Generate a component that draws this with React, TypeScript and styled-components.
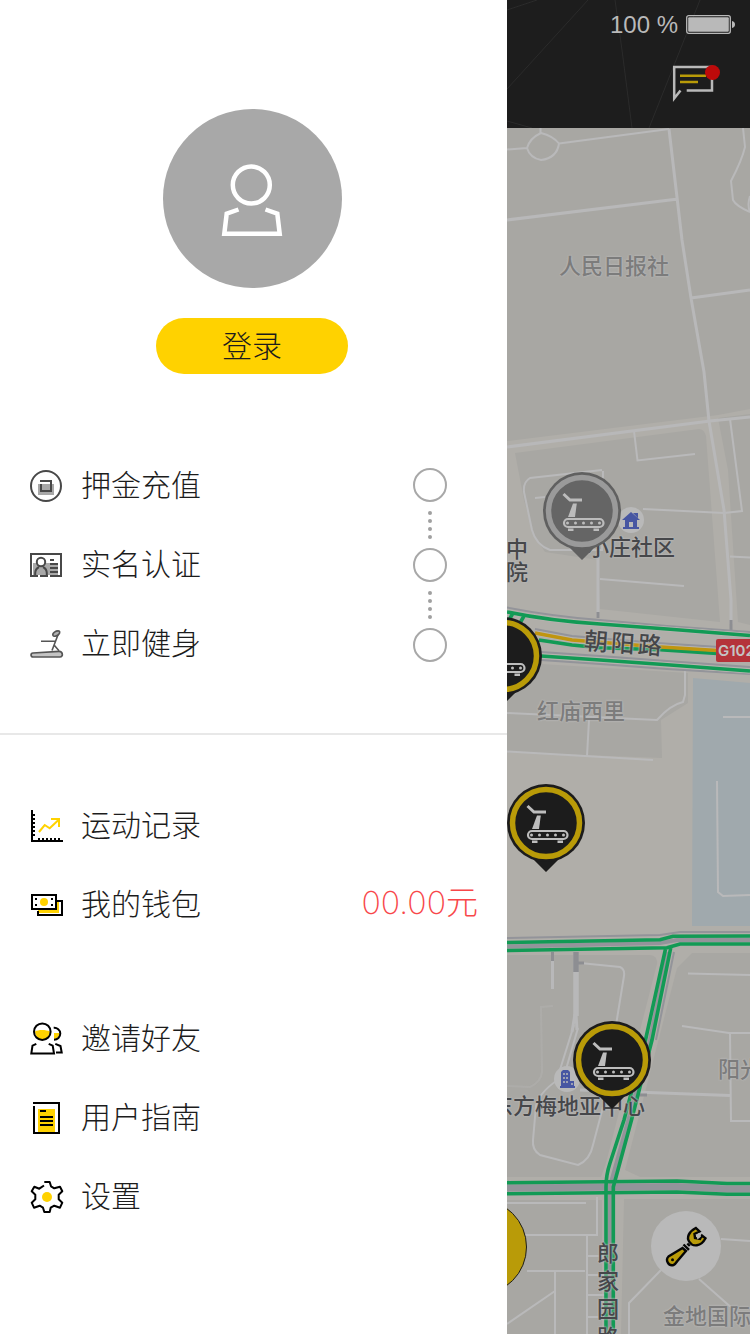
import React from "react";
import styled, { createGlobalStyle, css } from "styled-components";

const GlobalStyle = createGlobalStyle`
  *, *::before, *::after { box-sizing: border-box; }
  body {
    margin: 0;
    background: #ffffff;
    color: #1c1c1c;
    font-family: "Liberation Sans", "Noto Sans CJK SC", sans-serif;
  }
  svg { display: block; }
  ul { list-style: none; margin: 0; padding: 0; }
  button { border: 0; padding: 0; font: inherit; cursor: pointer; }
`;

const yellow = "#ffd200";
const dimYellow = "#b99b08";
const green = "#129a55";

/* ---------- Page ---------- */

const Page = styled.div`
  display: flex;
  min-height: 100vh;
  overflow: hidden;
`;

const Drawer = styled.aside`
  flex: 0 0 67.6%;
  background: #ffffff;
  padding-bottom: 40px;
`;

const Backdrop = styled.main`
  flex: 1;
  min-width: 0;
  display: flex;
  flex-direction: column;
`;

/* ---------- Drawer ---------- */

const Profile = styled.section`
  display: flex;
  flex-direction: column;
  align-items: center;
  gap: 30px;
  padding: 109px 3px 0 0;
`;

const Avatar = styled.div`
  width: 179px;
  height: 179px;
  border-radius: 50%;
  background: #a8a8a8;
`;

const LoginButton = styled.button`
  width: 192px;
  height: 56px;
  padding-bottom: 4px;
  border-radius: 28px;
  background: ${yellow};
  color: #1c1c1c;
  font-family: "Noto Sans CJK SC", sans-serif;
  font-size: 30px;
  font-weight: 300;
  line-height: 52px;
`;

const Steps = styled.section`
  display: flex;
  justify-content: space-between;
  align-items: center;
  padding: 72px 60px 50px 0;
  border-bottom: 2px solid #e8e8e8;
`;

const StepTrack = styled.div`
  display: flex;
  flex-direction: column;
  align-items: center;
  gap: 9px;
`;

const StepRing = styled.span`
  width: 34px;
  height: 34px;
  border: 2px solid #a8a8a8;
  border-radius: 50%;
`;

const StepDots = styled.span`
  display: flex;
  flex-direction: column;
  gap: 4px;
`;

const Dot = styled.i`
  width: 4px;
  height: 4px;
  border-radius: 50%;
  background: #a0a0a0;
`;

const Menu = styled.ul<{ $top: number }>`
  padding-top: ${(p) => p.$top}px;
`;

const MenuLink = styled.a`
  display: flex;
  align-items: center;
  gap: 17px;
  height: 79px;
  padding: 0 29px 0 30px;
  color: #1c1c1c;
  text-decoration: none;
  font-family: "Noto Sans CJK SC", sans-serif;
  font-size: 30px;
  font-weight: 300;
  line-height: 40px;
`;

const MenuLabel = styled.span`
  padding-bottom: 5px;
`;

const Amount = styled.span`
  margin-left: auto;
  padding-bottom: 4px;
  color: #f8474a;
  font-family: Inter, "Noto Sans CJK SC", sans-serif;
  font-size: 32px;
  font-weight: 200;
`;

/* ---------- Header over the map ---------- */

const Header = styled.header`
  position: relative;
  height: 128px;
  background: #1d1d1d;
  overflow: hidden;
`;

const HeaderLines = styled.svg`
  position: absolute;
  inset: 0;
`;

const StatusBar = styled.div`
  position: relative;
  display: flex;
  justify-content: flex-end;
  align-items: center;
  gap: 8px;
  height: 50px;
  padding-right: 14px;
  color: #b9b9b9;
  font-size: 24px;
  line-height: 28px;
`;

const Toolbar = styled.div`
  position: relative;
  display: flex;
  justify-content: flex-end;
  padding: 12px 28px 0 0;
`;

const MessageButton = styled.button`
  background: none;
`;

/* ---------- Map ---------- */

const MapCanvas = styled.div`
  position: relative;
  flex: 1;
  overflow: hidden;
  background: #b0aea9;
`;

const MapDrawing = styled.svg`
  position: absolute;
  inset: 0;
  width: 100%;
  height: 100%;
`;

const placed = css<{ $x: number; $y: number }>`
  position: absolute;
  left: ${(p) => p.$x}px;
  top: ${(p) => p.$y}px;
`;

const MapLabel = styled.span<{ $x: number; $y: number; $soft?: boolean }>`
  ${placed}
  color: ${(p) => (p.$soft ? "#7c7c7c" : "#46474a")};
  font-family: "Noto Sans CJK SC", sans-serif;
  font-size: 22px;
  font-weight: 500;
  line-height: 24px;
  white-space: nowrap;
  text-shadow: 0 0 2px #bbbbbb, 0 0 2px #bbbbbb;
`;

const StackedLabel = styled(MapLabel)<{ $step: number }>`
  display: flex;
  flex-direction: column;
  line-height: ${(p) => p.$step}px;
`;

const StreetLabel = styled(MapLabel)`
  display: flex;
  gap: 3px;
  font-size: 24px;
  transform: rotate(4deg);
`;

const RoadSign = styled.span<{ $x: number; $y: number }>`
  ${placed}
  padding: 0 5px 0 2px;
  border-radius: 2px;
  background: #b5333a;
  color: #c4c4c4;
  font-family: Inter, sans-serif;
  font-size: 15px;
  font-weight: 600;
  line-height: 23px;
`;

const Poi = styled.span<{ $x: number; $y: number }>`
  ${placed}
  width: 26px;
  height: 26px;
  border-radius: 50%;
  background: #b9b9b9;
`;

const PinButton = styled.button<{ $x: number; $y: number }>`
  ${placed}
  width: 78px;
  height: 88px;
  background: none;
`;

const ScanButton = styled.button<{ $x: number; $y: number }>`
  ${placed}
  width: 96px;
  height: 96px;
  border: 1px solid #1d1d1d;
  border-radius: 50%;
  background: ${dimYellow};
`;

const RepairButton = styled.button<{ $x: number; $y: number }>`
  ${placed}
  width: 70px;
  height: 70px;
  border-radius: 50%;
  background: #b9b9b9;
`;

/* ---------- Icons ---------- */

const IconSvg = styled.svg`
  flex: none;
  width: 34px;
  height: 34px;
  fill: none;
`;

function Icon({ stroke = "#000000", children }: { stroke?: string; children: React.ReactNode }) {
  return (
    <IconSvg viewBox="0 0 34 34" stroke={stroke} strokeWidth="2" aria-hidden="true">
      {children}
    </IconSvg>
  );
}

const DepositIcon = () => (
  <Icon stroke="#484848">
    <rect x="8" y="15" width="16" height="11" fill="#a8a8a8" stroke="none" />
    <circle cx="16" cy="17" r="15" />
    <path d="M10 12H21V21M11 15V22H22" />
  </Icon>
);

const IdentityIcon = () => (
  <Icon stroke="#484848">
    <rect x="3" y="15" width="25" height="12" fill="#a8a8a8" stroke="none" />
    <rect x="1" y="6" width="30" height="22" />
    <circle cx="11" cy="14" r="4.2" fill="#ffffff" />
    <path d="M5.2 28V25C5.4 21.500 7 20 9 19M13 19C15 20 16.700 21.500 16.800 25V28" />
    <path d="M20 12H24M20 16H28M20 20H28M20 24H28" />
    <path d="M8 28H10M18 28H20" stroke="#ffffff" />
  </Icon>
);

const TreadmillIcon = () => (
  <Icon stroke="#555555">
    <path d="M3 26L29 24.300C33 24.200 33.500 30 30 30H3C.4 30 .4 26.200 3 26Z" fill="#c4c4c4" strokeWidth="1.700" />
    <path d="M22 23.500L28.300 7M11 14.300H25M24.500 18.500L29 23.700" strokeWidth="1.600" />
    <path d="M23 8.500C22 6 26 3.500 29 4C30.500 5 29.500 7 28 8C26 9.300 23.500 9.700 23 8.500Z" fill="#b0b0b0" strokeWidth="1.600" />
  </Icon>
);

const ChartIcon = () => (
  <Icon>
    <path d="M2 1V32H33" />
    <path d="M3 6H5M3 10H5M3 14H5M3 18H5M3 22H5M3 26H5" />
    <path d="M9 31V29M13 31V29M17 31V29M21 31V29M25 31V29M29 31V29" />
    <path d="M9 23L14.700 16L19.700 19.300L29 10.500M21 10H29V18" stroke={yellow} />
  </Icon>
);

const WalletIcon = () => (
  <Icon>
    <rect x="8" y="20" width="21" height="5" fill={yellow} stroke="none" />
    <rect x="26" y="14" width="3" height="11" fill={yellow} stroke="none" />
    <path d="M27 13H32V27H8V23" />
    <rect x="2" y="7" width="24" height="14" fill="#ffffff" />
    <circle cx="14" cy="14" r="4" fill={yellow} stroke="none" />
    <path d="M5 11H7M5 17H7M21 11H23M21 17H23" />
  </Icon>
);

const FriendsIcon = () => (
  <Icon>
    <path d="M5 9.500C8 7.500 16 7.500 20 9.500C19.500 15 16 17.500 12.500 17.500C8.500 17.500 5.500 14.500 5 9.500Z" fill={yellow} stroke="none" />
    <path d="M24 11H29.500C29.500 14 27 16.500 24 17Z" fill={yellow} stroke="none" />
    <circle cx="12.300" cy="9.700" r="8.300" />
    <path d="M23.700 5.800C27 5.500 30.300 8 30.300 11.600C30.300 15 27.500 17.700 24 17.700" />
    <path d="M6.300 21.800L2.500 23.600L1.300 31.500H24L22.700 23.600L18.700 21.800" />
    <path d="M25.300 21.800L30.500 24L31.700 30.500H26" />
  </Icon>
);

const GuideIcon = () => (
  <Icon>
    <rect x="8" y="8" width="17" height="23" fill={yellow} stroke="none" />
    <path d="M3 2H29V32H4V5" />
    <path d="M10 10H16M10 16H23M10 20H23M10 24H23" />
  </Icon>
);

const SettingsIcon = () => (
  <Icon>
    <circle cx="17" cy="17" r="5" fill={yellow} stroke="none" />
    <path
      strokeLinejoin="round"
      d="M14.300 2H19.700L21 6.300L24.300 8.300L30 6.700L32.300 11.300L28.700 14.700V19.300L32.300 22.700L30 27.700L24.300 25.700L20.700 27.700L19.700 32H14.300L13 27.700L9.700 25.700L4 27.700L1.700 22.700L5.300 19.300V14.700L1.700 11.300L4.300 6.700L9.300 8.700L14 5.500"
    />
  </Icon>
);

const PersonIcon = () => (
  <svg width="179" height="179" viewBox="162 109 179 179" fill="none" stroke="#ffffff" strokeWidth="4.500" aria-hidden="true">
    <circle cx="250.300" cy="185" r="18.500" />
    <path d="M237.500 209.500L225.700 213.700L223.300 233.800H278.700L276.300 213.700L264.500 209.500" />
  </svg>
);

const BatteryIcon = () => (
  <svg width="50" height="20" viewBox="0 0 50 20" role="img" aria-label="电量">
    <rect x=".7" y=".7" width="43.600" height="17.600" rx="2" fill="none" stroke="#b9b9b9" strokeWidth="1.300" />
    <rect x="2.200" y="2.200" width="40.600" height="14.600" rx="1" fill="#b9b9b9" />
    <path d="M46 6C50 6.500 50 12.500 46 13Z" fill="#b9b9b9" />
  </svg>
);

const MessageIcon = () => (
  <svg width="50" height="42" viewBox="672 62 50 42" fill="none" strokeWidth="2.500" aria-hidden="true">
    <path d="M686.700 90.500H712V67H674.200V98.500L680.500 90.500" stroke="#b9b9b9" />
    <path d="M680 75.700H706M680 82H698" stroke={dimYellow} />
    <circle cx="712.500" cy="72.500" r="7.500" fill="#bd0a0a" />
  </svg>
);

const HouseIcon = () => (
  <svg width="26" height="26" viewBox="0 0 26 26" aria-hidden="true">
    <path d="M13 5L22 13H19V20H21V22H5V20H7V13H4ZM15 6H20V11Z" fill="#4756a2" />
    <path d="M11 20V15H15V20Z" fill="#b9b9b9" />
  </svg>
);

const OfficeIcon = () => (
  <svg width="26" height="26" viewBox="0 0 26 26" aria-hidden="true">
    <path d="M6 20H7V6L9 4H14L16 6V15H20V20H21V22H6Z" fill="#4756a2" />
    <path d="M9 8H11M12 8H14M9 12H11M12 12H14M9 16H11M12 16H14M17 18H19" stroke="#b9b9b9" strokeWidth="1.500" />
  </svg>
);

const WrenchIcon = () => (
  <svg width="70" height="70" viewBox="0 0 70 70" fill="none" stroke="#050505" strokeWidth="2.400" aria-hidden="true">
    <path d="M31.500 37L17.500 45.500C14 49 17.500 55.500 22.500 54C24 53.500 25 52 26 50.500L35 40Z" fill={dimYellow} />
    <circle cx="21.500" cy="48.700" r="1.500" fill="#050505" stroke="none" />
    <path d="M32.500 33.500L38 38.800M36.300 32.500L38.800 35" />
    <path
      d="M44.800 17C38 20.500 35 26.500 38.500 31C41.500 36 50 36 54.500 27.300L51 24.500L49 28L44 27L43.500 23L48.500 20.500Z"
      fill={dimYellow}
    />
    <path d="M45 24L46.500 28.500L50 25.500L48 22Z" fill="#b9b9b9" stroke="none" />
  </svg>
);

function Pin({ x, y, idle, label }: { x: number; y: number; idle?: boolean; label: string }) {
  const shell = idle ? "#606060" : "#1c1c1c";
  const ring = idle ? "#9a9a9a" : dimYellow;
  const glyph = idle ? "#bcbcbc" : "#bdbdbd";
  return (
    <PinButton type="button" $x={x} $y={y} aria-label={label}>
      <svg width="78" height="88" viewBox="0 0 78 88">
        <path d="M18 71L25 74L39 88L53 74L60 71Z" fill={shell} />
        <circle cx="39" cy="39" r="39" fill={shell} />
        <circle cx="39" cy="39" r="33.500" fill={idle ? "#656565" : shell} stroke={ring} strokeWidth="5.500" />
        <g fill="none" stroke={glyph}>
          <path d="M20.500 22L27 28H39" strokeWidth="3" />
          <path d="M30 31.500H33.800L32 45H25Z" fill={glyph} stroke="none" />
          <rect x="21" y="47" width="39.500" height="8" rx="4" strokeWidth="2.200" />
          <path d="M24.500 51H57" strokeWidth="3" strokeLinecap="round" strokeDasharray="0 8" />
          <path d="M25 57.800H30.500M50.500 57.800H56" strokeWidth="2.400" />
        </g>
      </svg>
    </PinButton>
  );
}

/* Streets and blocks under the pins, in screen coordinates */
const StreetMap = () => (
  <MapDrawing viewBox="507 128 243 1206" preserveAspectRatio="xMinYMin slice" fill="none" aria-hidden="true">
    <g fill="#a8a7a3">
      <path d="M507 128H750V409L718 415L507 441Z" />
      <path d="M515 453L699 429Q704 429 706 436L720 622L600 609L598 560L545 552L534 535L524 500Z" />
      <path d="M718 418L750 414V625L738 622L728 470Z" />
      <path d="M507 662L688 673V703L661 720L662 758L507 752Z" />
      <path d="M507 955H650Q658 956 657 964L606 1163L601 1177H507Z" />
      <path d="M692 953H750V1177H640L625 1170L677 968Z" />
      <path d="M507 1200H602V1334H507Z" />
      <path d="M624 1199H750V1334H621Z" />
    </g>
    <path d="M693 678L750 683V926H692Z" fill="#a0a9ad" />

    <g stroke="#b9b9ba" strokeWidth="2">
      <path d="M540.500 128V133" />
      <path d="M507 149.500L527 148Q530 138 541 133Q553 136 559 143.500Q557 158 541 160Q530 158 527 148M559 143.500L669 129" />
      <path d="M743 128L745 147Q742 160 731 181L733 200Q736 206 750 212" />
      <path d="M750 196Q747 205 750 212" />
      <path d="M634 431L637.500 460.500L695 454" />
      <path d="M730 419L742 511L724 513L643 509" />
      <path d="M535 498L545 497M602 470L530 478Q523 482 524 492L532 530Q536 545 550 550H602L603 471" />
      <path d="M600 579L684 586M730 556.500L750 557.500" />
      <path d="M507 713L657 720Q670 705 683 702L685 695V671M589 720L587 756" />
      <path d="M507 751.500L653 760M723 717H750M717 781L718 892L723 896L750 895" />
      <path d="M580 963L620 967Q625 969 624 976L616 1025" />
      <path d="M574 1025L558 1076M578 1028L564 1076Q540 1090 536 1106L533 1140Q532 1150 540 1155L578 1165Q590 1160 593 1145L603 1107" />
      <path d="M688 973.500L750 975M682 1026L729 1033H750M730 1033L731 1121H750" />
      <path d="M507 1086L530 1087Q541 1082 542 1072L541 1007L553 1006" opacity=".3" />
      <path d="M507 1203H586M597 1197V1235H519M527 1271H585M555 1271V1334M507 1324L555 1291M587 1235V1334M587 1256H606M587 1275H606M587 1295H606M587 1317H606" />
      <path d="M721 1239L750 1241M661 1270L629 1303V1334M699 1279L733 1309" />
    </g>
    <g stroke="#b8b8b9" strokeWidth="3">
      <path d="M507 220L678 199M669 129L682 240L691 298L704 372L709 421L724 510L731 600V624M691 298L750 290" />
      <path d="M507 447L710 421L750 417M598 552V618M580 1090L730 1095.500" />
      <path d="M552.500 952V989" />
      <path d="M576 952V1016" strokeWidth="5.500" />
      <path d="M575 1014L572 1032M576 1014L577 1030" />
    </g>
    <path d="M552.500 952V961M576 963H584M598 612V618M731 620V630M637 1095H647" stroke="#8d8e92" strokeWidth="3" />
    <path d="M576 952V972" stroke="#8d8e92" strokeWidth="5.500" />

    <g stroke="#93949a" strokeWidth="2">
      <path d="M507 607.500Q550 616 600 620L667 626L750 632" />
      <path d="M535 629L572 636L657 643L750 649" />
      <path d="M541 652L600 656L667 661L750 667M541 660L600 664L667 669L750 674" />
      <path d="M507 938L660 935L680 932H750" />
      <path d="M507 946.500L660 943L677 940H750" strokeWidth="4" />
      <path d="M668 952L650 1040L627 1125L610 1186V1334" strokeWidth="4" />
      <path d="M674 952L656 1040" />
      <path d="M507 1188L677 1186.500L727 1189H750" strokeWidth="7" />
    </g>
    <g stroke="#b7b5b1" strokeWidth="5">
      <path d="M507 612Q550 621 600 624L667 629L750 635.500" />
      <path d="M541 656L600 660L667 664.700L750 671" />
      <path d="M535 633L572 640L657 646.700L717 650.500" />
    </g>
    <g stroke={green} strokeWidth="3.600">
      <path d="M507 612Q550 621 600 624L667 629L750 635.500M513 613L509 620M524 616L520 623" />
      <path d="M539 640L572 645L600 647.700L660 649.700L717 653.500" />
      <path d="M541 656L600 660L667 664.700L750 671" />
      <path d="M507 942.500L660 939.700L673 936.300L750 936" />
      <path d="M507 950.500L667 947.700L680 944H750" />
      <path d="M507 1182.700L677 1181L727 1183.500H750" />
      <path d="M507 1193.700L677 1192L727 1194.300H750" />
      <path d="M665.500 949L645.500 1040L624 1120L610 1163Q606 1175 606 1187V1334" />
      <path d="M670.700 948L652 1040L631.500 1120L613.300 1187V1334" />
    </g>
    <path d="M535 633L572 640L657 646.700L717 650.500" stroke="#c09510" strokeWidth="3.600" />
  </MapDrawing>
);

/* ---------- Data ---------- */

type Item = { label: string; icon: React.ReactNode; amount?: string };

const steps: Item[] = [
  { label: "押金充值", icon: <DepositIcon /> },
  { label: "实名认证", icon: <IdentityIcon /> },
  { label: "立即健身", icon: <TreadmillIcon /> },
];

const account: Item[] = [
  { label: "运动记录", icon: <ChartIcon /> },
  { label: "我的钱包", icon: <WalletIcon />, amount: "00.00元" },
];

const more: Item[] = [
  { label: "邀请好友", icon: <FriendsIcon /> },
  { label: "用户指南", icon: <GuideIcon /> },
  { label: "设置", icon: <SettingsIcon /> },
];

function MenuList({ items, top = 0 }: { items: Item[]; top?: number }) {
  return (
    <Menu $top={top}>
      {items.map((item) => (
        <li key={item.label}>
          <MenuLink href="#">
            {item.icon}
            <MenuLabel>{item.label}</MenuLabel>
            {item.amount && <Amount>{item.amount}</Amount>}
          </MenuLink>
        </li>
      ))}
    </Menu>
  );
}

const Connector = () => (
  <StepDots>
    <Dot />
    <Dot />
    <Dot />
    <Dot />
  </StepDots>
);

export default function App() {
  return (
    <>
      <GlobalStyle />
      <Page>
        <Drawer>
          <Profile>
            <Avatar>
              <PersonIcon />
            </Avatar>
            <LoginButton type="button">登录</LoginButton>
          </Profile>
          <Steps>
            <MenuList items={steps} />
            <StepTrack aria-hidden="true">
              <StepRing />
              <Connector />
              <StepRing />
              <Connector />
              <StepRing />
            </StepTrack>
          </Steps>
          <nav>
            <MenuList items={account} top={51} />
            <MenuList items={more} top={55} />
          </nav>
        </Drawer>

        <Backdrop>
          <Header>
            <HeaderLines width="243" height="128" viewBox="507 0 243 128" fill="none" stroke="#2b2b2b" aria-hidden="true">
              <path d="M507 10L537 0M507 89L588 0M615 0L622 50L632 128M700 0L649 128M507 121L532 128" />
            </HeaderLines>
            <StatusBar>
              <span>100 %</span>
              <BatteryIcon />
            </StatusBar>
            <Toolbar>
              <MessageButton type="button" aria-label="消息">
                <MessageIcon />
              </MessageButton>
            </Toolbar>
          </Header>
          <MapCanvas>
            <StreetMap />
            <MapLabel $x={52} $y={124} $soft>人民日报社</MapLabel>
            <MapLabel $x={80} $y={405}>小庄社区</MapLabel>
            <StackedLabel $x={-1} $y={408} $step={23}>
              <span>中</span>
              <span>院</span>
            </StackedLabel>
            <StreetLabel $x={77} $y={502}>
              <span>朝</span>
              <span>阳</span>
              <span>路</span>
            </StreetLabel>
            <RoadSign $x={209} $y={511}>G102</RoadSign>
            <MapLabel $x={30} $y={569} $soft>红庙西里</MapLabel>
            <MapLabel $x={211} $y={927} $soft>阳光</MapLabel>
            <MapLabel $x={-16} $y={964}>东方梅地亚中心</MapLabel>
            <StackedLabel $x={90} $y={1109} $step={28}>
              <span>郎</span>
              <span>家</span>
              <span>园</span>
              <span>路</span>
            </StackedLabel>
            <MapLabel $x={156} $y={1174} $soft>金地国际</MapLabel>
            <Poi $x={111} $y={379}>
              <HouseIcon />
            </Poi>
            <Poi $x={47} $y={938}>
              <OfficeIcon />
            </Poi>
            <Pin x={36} y={344} idle label="小庄社区健身点" />
            <Pin x={-43} y={489} label="朝阳路健身点" />
            <Pin x={0} y={656} label="红庙西里健身点" />
            <Pin x={66} y={893} label="东方梅地亚中心健身点" />
            <ScanButton type="button" $x={-76} $y={1071} aria-label="扫码" />
            <RepairButton type="button" $x={144} $y={1083} aria-label="报修">
              <WrenchIcon />
            </RepairButton>
          </MapCanvas>
        </Backdrop>
      </Page>
    </>
  );
}
